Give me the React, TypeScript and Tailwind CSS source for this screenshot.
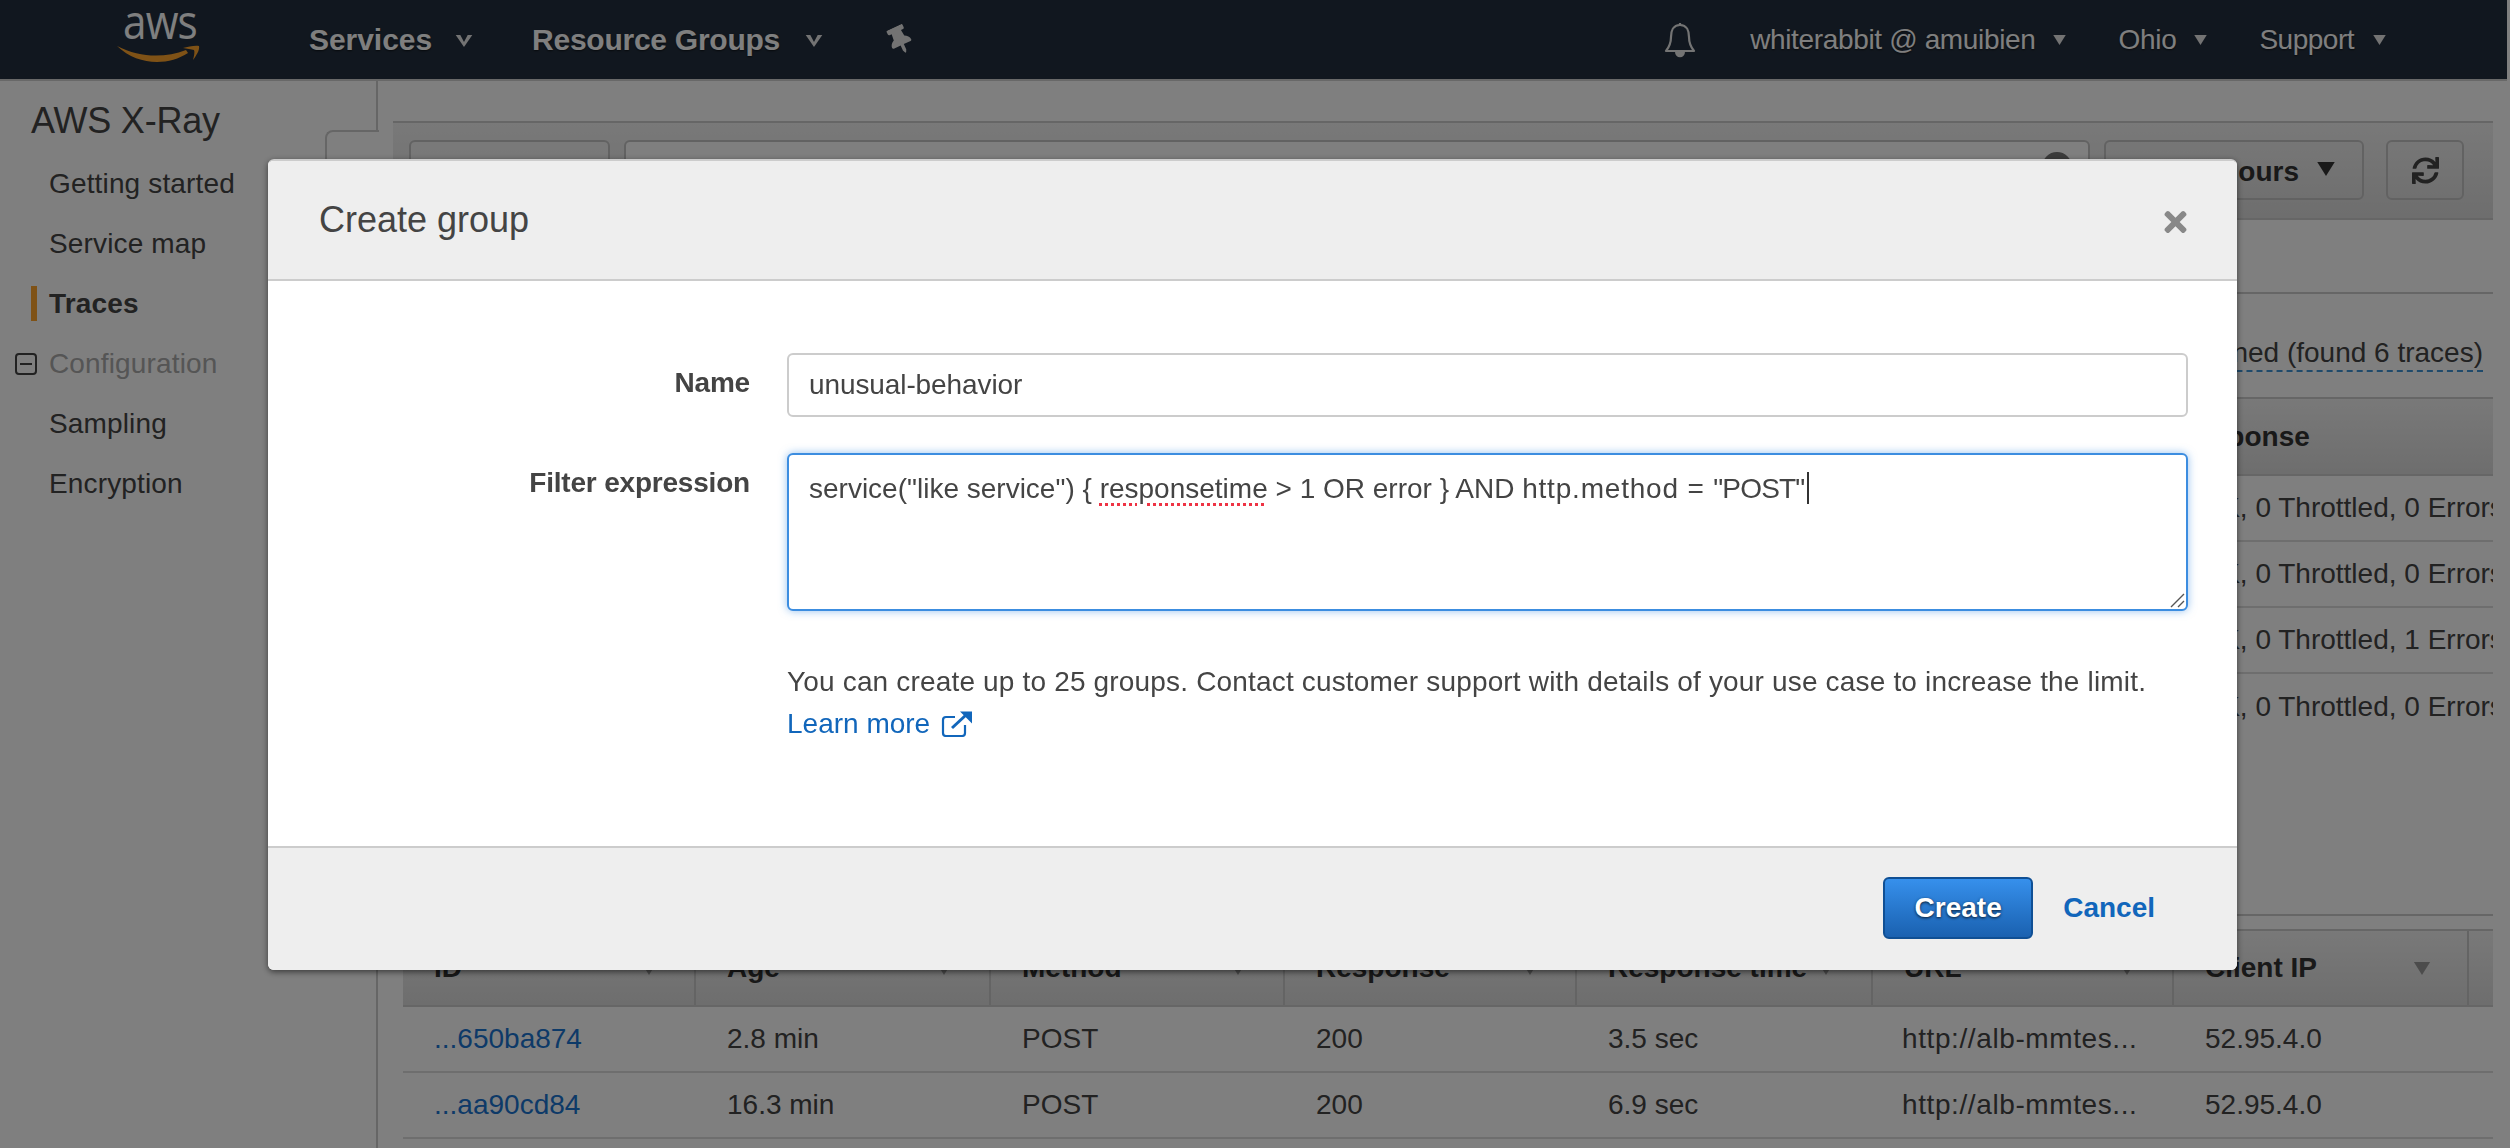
import React from "react";
import { FaTimes, FaSync, FaThumbtack } from "react-icons/fa";

function Caret({ className }: { className: string }) {
  return (
    <svg viewBox="0 0 10 8" className={className} fill="currentColor">
      <path d="M0 0h10L5 8z" />
    </svg>
  );
}

function NavChevron({ className }: { className: string }) {
  return (
    <svg viewBox="0 0 18 13" className={className} fill="currentColor">
      <path d="M0 0h5l4 7.5L13 0h5L9 13z" />
    </svg>
  );
}

function Header() {
  return (
    <header className="h-[81px] shrink-0 bg-[#232f3e] border-b-2 border-[#d0d0d0] flex items-center text-white [text-shadow:0_1px_2px_rgba(0,0,0,0.6)]">
      <div className="ml-[100px] w-[120px] h-[79px] relative flex justify-center items-start">
        <span className="text-[47px] leading-[42px] tracking-[-1px] font-['Open_Sans',sans-serif] text-white scale-x-90 [text-shadow:none]">aws</span>
        <svg viewBox="0 0 120 79" className="absolute inset-0 w-[120px] h-[79px]" fill="#ffa52d">
          <path d="M17 46 C40 58 65 58 86 50 L88 53 C68 66 38 66 17 46 Z" />
          <path d="M83 48 C88 47 95 45 99 46 C100 50 96 56 93 60 C94 56 95 52 94 50 C91 49 87 49 83 48 Z" />
        </svg>
      </div>
      <span className="ml-[89px] text-[30px] font-bold tracking-[-0.05px]">Services</span>
      <NavChevron className="w-[18px] h-[12px] ml-[23px] mt-[2px] text-[#e6e6e6]" />
      <span className="ml-[59px] text-[30px] font-bold tracking-[-0.25px]">Resource Groups</span>
      <NavChevron className="w-[18px] h-[12px] ml-[25px] mt-[2px] text-[#e6e6e6]" />
      <FaThumbtack className="ml-[65px] w-[24px] h-[28px] -rotate-[25deg] text-[#e6e6e6]" />
      <div className="ml-auto flex items-center">
        <svg viewBox="0 0 32 36" className="w-[32px] h-[36px]" fill="none" stroke="#e8e8e8" strokeWidth="2.2">
          <path d="M16 3c-7 0-9 6-9 12 0 6-1 9-5 14h28c-4-5-5-8-5-14 0-6-2-12-9-12z" strokeLinejoin="round" />
          <path d="M16 1v2" />
          <path d="M12 29c0 7 8 7 8 0z" fill="#e8e8e8" />
        </svg>
        <span className="ml-[54px] text-[28px] tracking-[-0.35px]">whiterabbit @ amuibien</span>
        <Caret className="w-[13px] h-[10px] ml-[18px] text-[#e6e6e6]" />
        <span className="ml-[52px] text-[28px] tracking-[-0.3px]">Ohio</span>
        <Caret className="w-[13px] h-[10px] ml-[18px] text-[#e6e6e6]" />
        <span className="ml-[52px] text-[28px] tracking-[-0.5px]">Support</span>
        <Caret className="w-[13px] h-[10px] ml-[19px] mr-[121px] text-[#e6e6e6]" />
      </div>
    </header>
  );
}

function Sidebar() {
  const item = "h-[60px] flex items-center pl-[49px] text-[28px] text-[#444] tracking-[0.15px]";
  return (
    <aside className="w-[378px] shrink-0 border-r-2 border-[#ccc] relative">
      <div className="absolute left-[325px] top-[49px] w-[54px] h-[70px] bg-white border-l-2 border-t-2 border-[#ccc] rounded-tl-[8px] z-10" />
      <div className="pl-[31px] pt-[17px] pb-[10px] text-[36px] leading-[46px] text-[#444] tracking-[-0.2px]">AWS X-Ray</div>
      <div className={item}>Getting started</div>
      <div className={item}>Service map</div>
      <div className={item + " font-bold relative"}>
        <span className="absolute left-[31px] top-[12px] w-[6px] h-[35px] bg-[#ffa52d]" />
        Traces
      </div>
      <div className="h-[60px] flex items-center pl-[15px] text-[28px] text-[#aaa] tracking-[0.15px]">
        <span className="w-[22px] h-[22px] border-2 border-[#444] rounded-[4px] flex items-center justify-center mr-[12px]">
          <span className="w-[12px] h-[2px] bg-[#444]" />
        </span>
        Configuration
      </div>
      <div className={item}>Sampling</div>
      <div className={item}>Encryption</div>
    </aside>
  );
}

const cols = "grid grid-cols-[293px_295px_294px_292px_296px_301px_295px_24px]";

function Main() {
  const heads = ["ID", "Age", "Method", "Response", "Response time", "URL", "Client IP", ""];
  const rows = [
    ["...650ba874", "2.8 min", "POST", "200", "3.5 sec", "http://alb-mmtes...", "52.95.4.0"],
    ["...aa90cd84", "16.3 min", "POST", "200", "6.9 sec", "http://alb-mmtes...", "52.95.4.0"],
  ];
  const status = ["0 Throttled, 0 Errors", "0 Throttled, 0 Errors", "0 Throttled, 1 Errors", "0 Throttled, 0 Errors"];
  return (
    <main className="flex-1 min-w-0 pl-[15px] pr-[14px] pt-[40px] text-[28px] text-[#444]">
      <div className="h-[99px] border-t-2 border-[#ccc] border-b-2 bg-gradient-to-b from-[#f2f2f2] to-[#dcdcdc] flex items-start pt-[17px] pl-[16px]">
        <div className="w-[201px] h-[60px] border-2 border-[#c4c4c4] rounded-[6px] bg-white/30" />
        <div className="ml-[14px] w-[1466px] h-[60px] border-2 border-[#c4c4c4] rounded-[6px] bg-white relative">
          <span className="absolute right-[16px] top-[10px] w-[30px] h-[30px] rounded-full border-[7px] border-[#777]" />
        </div>
        <div className="ml-[14px] w-[260px] h-[60px] border-2 border-[#c4c4c4] rounded-[6px] flex items-center justify-end pr-[27px] pt-[3px] font-bold text-[#333]">
          Last 6 hours
          <Caret className="w-[18px] h-[14px] ml-[18px] -mt-[6px] text-[#333]" />
        </div>
        <div className="ml-[22px] w-[78px] h-[60px] border-2 border-[#c4c4c4] rounded-[6px] flex items-center justify-center">
          <FaSync className="w-[27px] h-[27px] text-[#444]" />
        </div>
      </div>
      <div className="h-[74px] border-b-2 border-[#ccc]" />
      <div className="h-[78px] flex justify-end items-start pt-[42px] pr-[10px]">
        <span className="border-b-2 border-dashed border-[#3f95d6] leading-[34px]">All results returned (found 6 traces)</span>
      </div>
      <div className="ml-[10px] pt-[25px]">
        <div className="h-[79px] border-t-2 border-b-2 border-[#ccc] bg-gradient-to-b from-[#f2f2f2] to-[#dcdcdc] flex items-center pl-[1773px] font-bold text-[#333]">
          Response
        </div>
        {status.map((s, i) => (
          <div key={i} className="h-[66px] border-b-2 border-[#ddd] last:border-b-0 flex items-center pl-[1773px] overflow-hidden whitespace-nowrap">
            {i + 5} OK, {s}
          </div>
        ))}
      </div>
      <div className="mt-[174px] border-b-2 border-[#ccc]" />
      <div className="ml-[10px] mt-[13px]">
        <div className={cols + " h-[78px] border-t-2 border-b-2 border-[#ccc] bg-gradient-to-b from-[#f2f2f2] to-[#dcdcdc] font-bold text-[#333]"}>
          {heads.map((h, i) => (
            <div key={i} className="border-r-2 border-[#c8c8c8] last:border-r-0 pl-[31px] pr-[36px] flex items-center justify-between">
              <span>{h}</span>
              {h && <Caret className="w-[18px] h-[13px] text-[#999]" />}
            </div>
          ))}
        </div>
        {rows.map((r, i) => (
          <div key={i} className={cols + " h-[66px] border-b-2 border-[#ddd] items-center"}>
            {r.map((c, j) => (
              <div
                key={j}
                className={
                  j === 0
                    ? "pl-[31px] text-[#1b74d0]"
                    : j === 5
                      ? "pl-[29px] tracking-[0.6px]"
                      : "pl-[31px]"
                }
              >
                {c}
              </div>
            ))}
          </div>
        ))}
      </div>
    </main>
  );
}

function Modal() {
  const field = "ml-[37px] w-[1401px] rounded-[6px] bg-white";
  return (
    <div className="fixed inset-0 bg-black/50 pl-[268px] pt-[159px] z-20">
      <div className="w-[1969px] h-[811px] bg-white rounded-[6px] border-t-2 border-[#ccc] shadow-[0_2px_6px_rgba(0,0,0,0.55)] flex flex-col overflow-hidden text-[28px] text-[#444]">
        <div className="h-[120px] shrink-0 bg-[#eee] border-b-2 border-[#ccc] flex items-center justify-between pl-[51px] pr-[46px]">
          <span className="text-[36px]">Create group</span>
          <FaTimes className="w-[31px] h-[32px] text-[#888] mt-[4px]" />
        </div>
        <div className="flex-1 pt-[72px]">
          <div className="flex items-start">
            <div className="w-[482px] text-right font-bold pt-[14px] leading-[32px] tracking-[-0.2px]">Name</div>
            <div className={field + " h-[64px] border-2 border-[#ccc] flex items-center pl-[20px] tracking-[-0.1px]"}>unusual-behavior</div>
          </div>
          <div className="flex items-start mt-[36px]">
            <div className="w-[482px] text-right font-bold pt-[14px] leading-[32px] tracking-[-0.2px]">Filter expression</div>
            <div className={field + " h-[158px] border-2 border-[#3c8de0] shadow-[0_0_8px_rgba(60,141,224,0.55)] pl-[20px] pt-[16px] relative whitespace-nowrap leading-[36px]"}>
              service("like service") {"{"} <span className="underline decoration-dotted decoration-[#ee3344] decoration-[3px] underline-offset-[5px]">responsetime</span> {">"} 1 OR error {"}"} AND <span className="tracking-[0.8px]">http.method = </span><span className="tracking-[-0.8px]">"POST"</span><span className="inline-block w-[2px] h-[32px] ml-[2px] bg-[#333] align-[-6px]" />
              <svg viewBox="0 0 16 16" className="absolute right-[1px] bottom-[1px] w-[16px] h-[16px]" stroke="#555" strokeWidth="1.4">
                <path d="M2 15 L15 2 M9 15 L15 9" />
              </svg>
            </div>
          </div>
          <div className="ml-[519px] mt-[50px] leading-[42px]">
            <div className="tracking-[0.17px]">You can create up to 25 groups. Contact customer support with details of your use case to increase the limit.</div>
            <div className="flex items-center text-[#1166bb]">
              Learn more
              <svg viewBox="0 0 32 26" className="w-[32px] h-[26px] ml-[11px]" fill="none" stroke="#1166bb" strokeWidth="2.2">
                <path d="M24 14v8a3 3 0 0 1-3 3H5a3 3 0 0 1-3-3V9a3 3 0 0 1 3-3h9" />
                <path d="M11 17 L25 4" strokeWidth="3" />
                <path d="M19 0.5h12v12z" fill="#1166bb" stroke="none" />
              </svg>
            </div>
          </div>
        </div>
        <div className="h-[124px] shrink-0 bg-[#eee] border-t-2 border-[#ccc] flex items-start justify-end pt-[29px] pr-[82px]">
          <div className="w-[150px] h-[62px] rounded-[6px] border-2 border-[#0f4f94] bg-gradient-to-b from-[#3690ec] to-[#1a61b0] text-white font-bold flex items-center justify-center [text-shadow:0_1px_3px_rgba(0,0,0,0.8)]">Create</div>
          <div className="ml-[30px] h-[62px] flex items-center font-bold text-[#1166bb]">Cancel</div>
        </div>
      </div>
    </div>
  );
}

export default function App() {
  return (
    <div className="h-screen overflow-hidden flex flex-col bg-white pr-[3px] font-['Liberation_Sans',Arial,sans-serif]">
      <Header />
      <div className="flex flex-1 min-h-0">
        <Sidebar />
        <Main />
      </div>
      <Modal />
    </div>
  );
}
